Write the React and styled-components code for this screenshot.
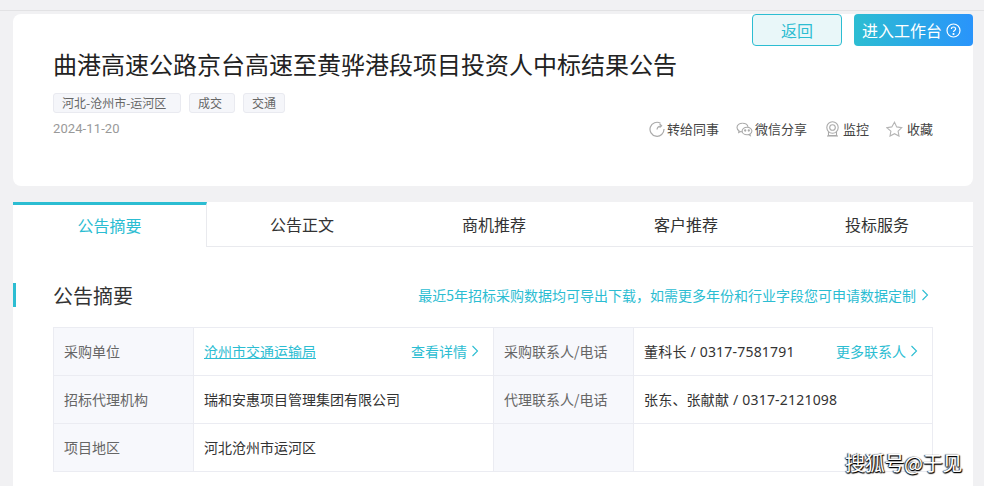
import React from 'react';
import styled, { createGlobalStyle } from 'styled-components';

const Global = createGlobalStyle`
  html, body { margin: 0; padding: 0; height: 486px; overflow: hidden; background: #f1f1f3; }
  * { box-sizing: border-box; }
  body { font-family: "Noto Sans", "Noto Sans CJK SC", sans-serif; }
`;
const Page = styled.div`
  position: relative; width: 984px; height: 486px; overflow: hidden; background: #f1f1f3;
`;
const TopLine = styled.div`height: 11px; border-bottom: 1px solid #e2e2e4; margin-bottom: 3px;`;
const Column = styled.div`width: 960px; margin-left: 13px; display: flex; flex-direction: column; gap: 16px;`;
const HeadCard = styled.section`
  height: 172px; background: #fff; border-radius: 8px; padding: 30px 40px 0;
`;
const Title = styled.h1`
  margin: 0; font-size: 24px; line-height: 40px; height: 40px; font-weight: 400; color: #222;
  font-family: "Noto Sans CJK SC", sans-serif; white-space: nowrap;
`;
const Tags = styled.div`display: flex; gap: 8px; margin-top: 9px;`;
const Tag = styled.span`
  width: ${p => p.$w}px; height: 20px; line-height: 18px; padding-left: 8px; font-size: 12px; color: #666;
  background: #f5f6fa; border: 1px solid #e9eaf0; border-radius: 3px; white-space: nowrap;
  font-family: "Noto Sans CJK SC", sans-serif;
`;
const MetaRow = styled.div`display: flex; align-items: center; justify-content: space-between; margin-top: 5px;`;
const DateText = styled.span`font-size: 13px; letter-spacing: 0.1px; color: #999; line-height: 20px; font-family: Roboto, sans-serif;`;
const Actions = styled.div`display: flex; align-items: center; gap: 17px; margin-top: 1px;`;
const Action = styled.span`
  display: inline-flex; align-items: center; gap: ${p => p.$gap || 2}px; font-size: 13px; color: #444; line-height: 20px;
  margin-left: ${p => p.$lead || 0}px;
  font-family: "Noto Sans CJK SC", sans-serif;
`;
const TopButtons = styled.div`position: absolute; top: 14px; left: 752px; display: flex; gap: 12px;`;
const BackBtn = styled.button`
  width: 90px; height: 32px; padding: 0; background: #e9f7f9; border: 1px solid #2cbdd2; border-radius: 4px;
  color: #2cbdd2; font-size: 16px; font-family: "Noto Sans CJK SC", sans-serif;
`;
const EnterBtn = styled.button`
  width: 119px; height: 32px; padding: 0 0 0 8px; border: 0; border-radius: 4px; color: #fff; font-size: 16px;
  background: linear-gradient(90deg, #2cbdd2, #2994fb);
  display: flex; align-items: center; gap: 4px; font-family: "Noto Sans CJK SC", sans-serif;
`;
const Panel = styled.section`background: #fff; height: 284px;`;
const TabBar = styled.nav`display: flex; height: 45px; border-bottom: 1px solid #e9eaee;`;
const Tab = styled.div`
  width: ${p => p.$w}px; height: 45px; padding-bottom: 2px; display: flex; align-items: center; justify-content: center;
  font-size: 16px; font-family: "Noto Sans CJK SC", sans-serif;
  color: ${p => p.$active ? '#2cbdd2' : '#333'};
  border-top: ${p => p.$active ? '3px solid #2cbdd2' : '0'};
  ${p => p.$active ? 'background:#fff; border-right:1px solid #e9eaee;' : ''}
`;
const SectionHead = styled.div`
  position: relative; display: flex; align-items: center; justify-content: space-between;
  padding: 14px 44px 0 40px; height: 80px;
`;
const Marker = styled.i`position: absolute; left: 0; top: 36px; width: 3px; height: 24px; background: #2cbdd2;`;
const SectionTitle = styled.h2`
  margin: 2px 0 0; font-size: 20px; font-weight: 400; color: #333; font-family: "Noto Sans CJK SC", sans-serif;
`;
const Notice = styled.a`
  display: inline-flex; align-items: center; gap: 5px; font-size: 14px; color: #2cbdd2; margin-top: 1px;
  font-family: "Noto Sans CJK SC", sans-serif;
`;
const Table = styled.div`
  margin: 0 40px; width: 880px; display: grid; grid-template-columns: 140px 300px 140px 298px;
  grid-auto-rows: 48px; border: 1px solid #ebecf2; border-width: 1px 1px 0 1px;
`;
const Cell = styled.div`
  display: flex; align-items: center; justify-content: space-between; padding: 0 10px 2px;
  font-size: 14px; color: ${p => p.$label ? '#666' : '#333'};
  font-family: "Noto Sans CJK SC", sans-serif;
  background: ${p => p.$label ? '#f7f8fc' : '#fff'};
  border-bottom: 1px solid #ebecf2;
  border-right: ${p => p.$last ? '0' : '1px solid #ebecf2'};
  white-space: nowrap;
`;
const Phone = styled.span`font-family: "Noto Sans", "Noto Sans CJK SC", sans-serif; letter-spacing: 0.2px;`;
const Company = styled.a`color: #2cbdd2; text-decoration: underline;`;
const More = styled.a`display: inline-flex; align-items: center; gap: 4px; color: #2cbdd2; margin-right: 4px;`;
const Watermark = styled.div`
  position: absolute; left: 845px; top: 449px; font-size: 20px; line-height: 28px; color: #fff; letter-spacing: -0.3px;
  text-shadow: 1px 1px 1px #000, -1px 0 1px #333, 0 1px 1px #000;
  font-family: "Noto Sans CJK SC", sans-serif;
`;

const Chevron = () => (
  <svg width="8" height="12" viewBox="0 0 8 12" fill="none" stroke="#2cbdd2" strokeWidth="1.1"><path d="M1.5 1l5 5-5 5" /></svg>
);
const ShareIcon = () => (
  <svg width="16" height="16" viewBox="0 0 16 16" fill="none" stroke="#aaa" strokeWidth="1.2">
    <path d="M11.5 2.2A7 7 0 1 0 15 8" /><path d="M8 8.5c.3-2.2 1.7-3.4 4.2-3.6" /><path d="M10.6 2.8l2 2-2 1.8" />
  </svg>
);
const WechatIcon = () => (
  <svg width="17" height="15" viewBox="0 0 17 15" fill="none" stroke="#aaa" strokeWidth="1.1">
    <path d="M6.5 1.2C3.400 1.200 1 3 1 5.400c0 1.400.8 2.500 2 3.300L2.700 10.500l2-1c.5.1 1 .2 1.600.2" />
    <path d="M11 5.200c-2.800 0-4.900 1.700-4.900 3.800s2.100 3.800 4.900 3.800c.6 0 1.100-.1 1.600-.2l1.700 1-.4-1.600c1.200-.7 2-1.800 2-3 0-2.100-2.100-3.800-4.900-3.800z" />
    <path d="M12 4.800C11.600 2.700 9.300 1.200 6.500 1.200" />
    <circle cx="9.200" cy="8.500" r=".6" fill="#aaa" /><circle cx="12.800" cy="8.500" r=".6" fill="#aaa" />
  </svg>
);
const CameraIcon = () => (
  <svg width="16" height="16" viewBox="0 0 16 16" fill="none" stroke="#aaa" strokeWidth="1.1">
    <circle cx="7.500" cy="6.500" r="5.700" /><circle cx="7.500" cy="6.500" r="2.800" />
    <path d="M3.500 11v3.500h8V11" /><path d="M2 15h11" />
  </svg>
);
const StarIcon = () => (
  <svg width="17" height="16" viewBox="0 0 17 16" fill="none" stroke="#b5b5b5" strokeWidth="1.1">
    <path d="M8.500 1.200l2.200 4.700 5 .7-3.600 3.500.9 5-4.500-2.400-4.500 2.400.9-5L.8 6.600l5-.7z" />
  </svg>
);
const HelpIcon = () => (
  <svg width="15" height="15" viewBox="0 0 15 15" fill="none" stroke="#fff" strokeWidth="1.200">
    <circle cx="7.500" cy="7.500" r="6.500" /><path d="M5.400 6c0-1.300 1-2 2.100-2s2.100.7 2.100 1.900c0 1.500-2.100 1.500-2.100 3.100" />
    <circle cx="7.500" cy="11" r=".5" fill="#fff" />
  </svg>
);

export default function App() {
  return (
    <Page>
      <Global />
      <TopLine />
      <Column>
        <HeadCard>
          <Title>曲港高速公路京台高速至黄骅港段项目投资人中标结果公告</Title>
          <Tags>
            <Tag $w={128}>河北-沧州市-运河区</Tag>
            <Tag $w={46}>成交</Tag>
            <Tag $w={42}>交通</Tag>
          </Tags>
          <MetaRow>
            <DateText>2024-11-20</DateText>
            <Actions>
              <Action><ShareIcon />转给同事</Action>
              <Action><WechatIcon />微信分享</Action>
              <Action $lead={1}><CameraIcon />监控</Action>
              <Action $gap={4}><StarIcon />收藏</Action>
            </Actions>
          </MetaRow>
        </HeadCard>
        <Panel>
          <TabBar>
            <Tab $w={194} $active>公告摘要</Tab>
            <Tab $w={190}>公告正文</Tab>
            <Tab $w={194}>商机推荐</Tab>
            <Tab $w={190}>客户推荐</Tab>
            <Tab $w={192}>投标服务</Tab>
          </TabBar>
          <SectionHead>
            <Marker />
            <SectionTitle>公告摘要</SectionTitle>
            <Notice>最近5年招标采购数据均可导出下载，如需更多年份和行业字段您可申请数据定制<Chevron /></Notice>
          </SectionHead>
          <Table>
            <Cell $label>采购单位</Cell>
            <Cell><Company>沧州市交通运输局</Company><More>查看详情<Chevron /></More></Cell>
            <Cell $label>采购联系人/电话</Cell>
            <Cell $last><Phone>董科长 / 0317-7581791</Phone><More>更多联系人<Chevron /></More></Cell>
            <Cell $label>招标代理机构</Cell>
            <Cell>瑞和安惠项目管理集团有限公司</Cell>
            <Cell $label>代理联系人/电话</Cell>
            <Cell $last><Phone>张东、张献献 / 0317-2121098</Phone></Cell>
            <Cell $label>项目地区</Cell>
            <Cell>河北沧州市运河区</Cell>
            <Cell $label></Cell>
            <Cell $last></Cell>
          </Table>
        </Panel>
      </Column>
      <TopButtons>
        <BackBtn>返回</BackBtn>
        <EnterBtn>进入工作台<HelpIcon /></EnterBtn>
      </TopButtons>
      <Watermark>搜狐号@于见</Watermark>
    </Page>
  );
}
